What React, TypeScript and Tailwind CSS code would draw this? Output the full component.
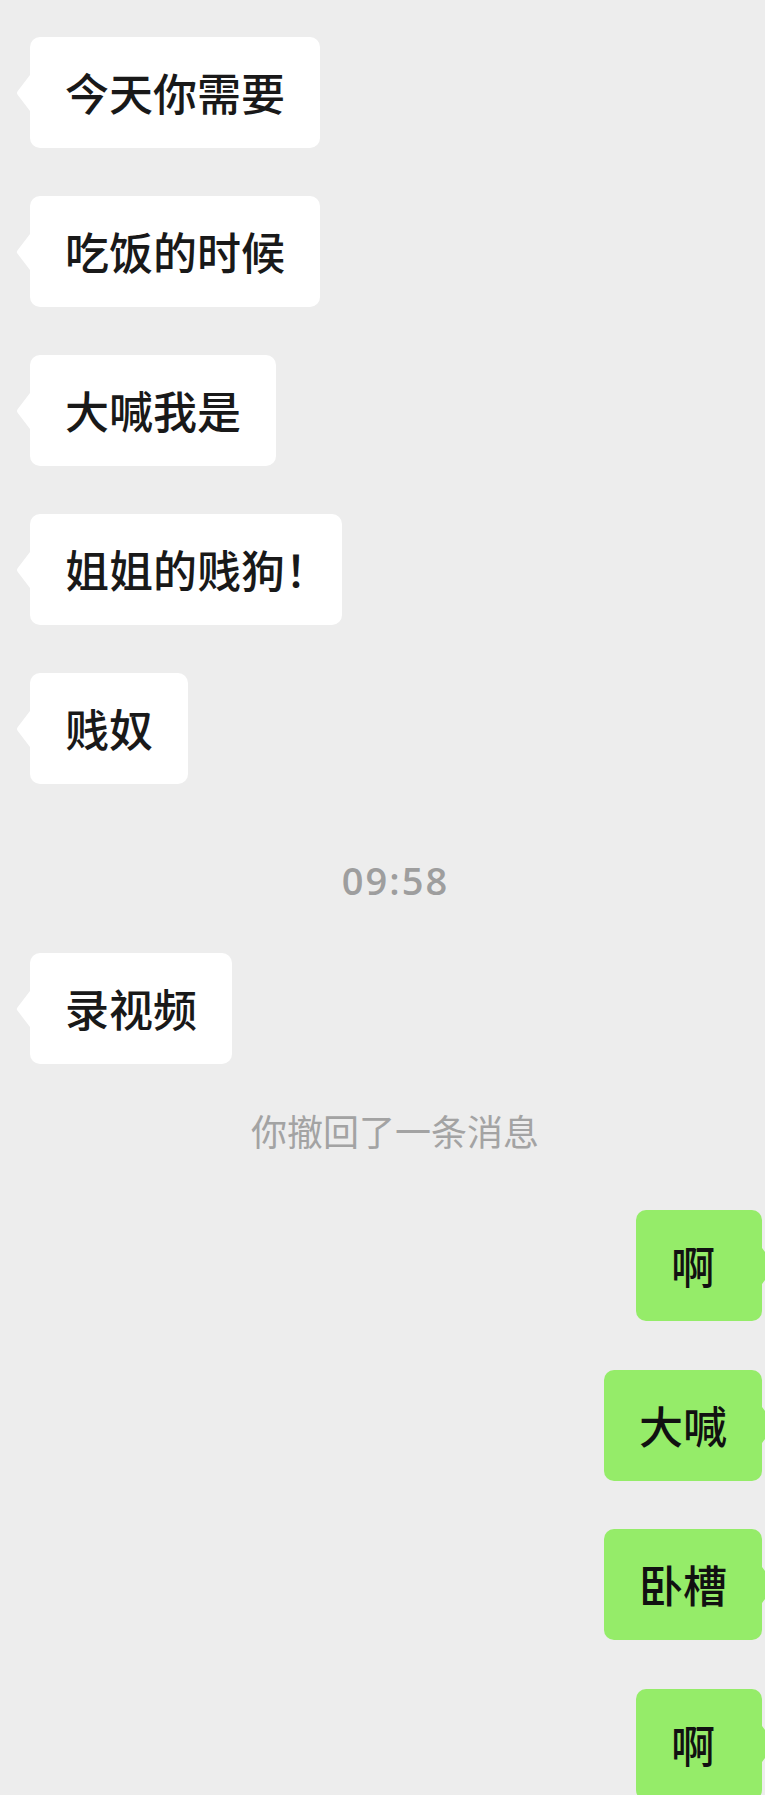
import React from "react";

type Msg = { text: string; halt?: boolean };

const incoming: Msg[] = [
  { text: "今天你需要" },
  { text: "吃饭的时候" },
  { text: "大喊我是" },
  { text: "姐姐的贱狗！", halt: true },
  { text: "贱奴" },
];

const outgoing = ["啊", "大喊", "卧槽", "啊"];

const cjk = "font-['PingFang_SC','Noto_Sans_CJK_SC',sans-serif]";

function Tail({ side, color }: { side: "left" | "right"; color: string }) {
  const d =
    side === "left"
      ? "M14 0 L1.6 16.2 Q0 18 1.6 19.8 L14 36 Z"
      : "M0 0 L12.4 16.2 Q14 18 12.4 19.8 L0 36 Z";
  return (
    <svg
      width="14"
      height="36"
      viewBox="0 0 14 36"
      className={
        side === "left"
          ? "absolute left-[-14px] top-1/2 -translate-y-1/2"
          : "absolute right-[-14px] top-1/2 -translate-y-1/2"
      }
    >
      <path d={d} fill={color} />
    </svg>
  );
}

function LeftBubble({ text, halt }: Msg) {
  return (
    <div className="flex">
      <div className="relative rounded-[10px] bg-white px-[35px] py-[33px]">
        <Tail side="left" color="#ffffff" />
        <p
          className={`${cjk} text-[44px] font-medium leading-[45px] text-[#191919] whitespace-nowrap ${
            halt ? "[font-feature-settings:'halt']" : ""
          }`}
        >
          {text}
        </p>
      </div>
    </div>
  );
}

function RightBubble({ text }: { text: string }) {
  return (
    <div className="flex justify-end pr-[3px]">
      <div className="relative min-w-[126px] rounded-[10px] bg-[#95ec69] py-[33px] pl-[35px] pr-[35px]">
        <Tail side="right" color="#95ec69" />
        <p className={`${cjk} text-[44px] font-medium leading-[45px] text-[#111111] whitespace-nowrap`}>
          {text}
        </p>
      </div>
    </div>
  );
}

export default function App() {
  return (
    <div className="relative h-[1795px] w-[765px] overflow-hidden bg-[#ededed]">
      <div className="flex flex-col gap-[48px] pl-[30px] pt-[37px]">
        {incoming.map((m, i) => (
          <LeftBubble key={i} {...m} />
        ))}
      </div>

      <div className="mt-[74px] flex justify-center pl-[26px]">
        <span className="font-['Open_Sans',sans-serif] text-[38px] font-semibold leading-[44px] tracking-[2px] text-[#9e9e9e]">
          09:58
        </span>
      </div>

      <div className="mt-[51px] pl-[30px]">
        <LeftBubble text="录视频" />
      </div>

      <div className="mt-[44px] flex justify-center pl-[25px]">
        <span className={`${cjk} text-[36px] leading-[44px] text-[#a3a3a3]`}>
          你撤回了一条消息
        </span>
      </div>

      <div className="mt-[58px] flex flex-col gap-[48.5px]">
        {outgoing.map((t, i) => (
          <RightBubble key={i} text={t} />
        ))}
      </div>
    </div>
  );
}
